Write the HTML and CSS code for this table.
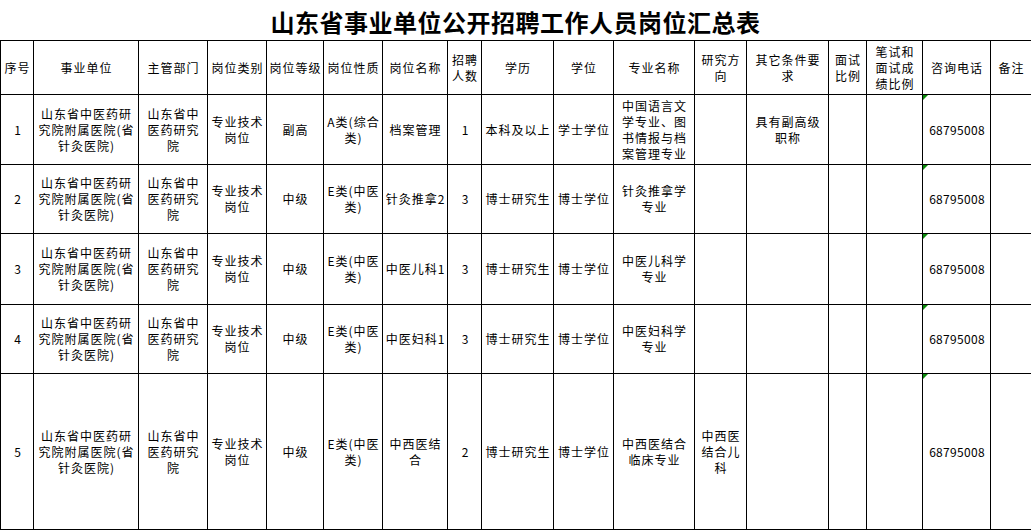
FILE: index.html
```html
<!DOCTYPE html>
<html lang="zh-CN">
<head>
<meta charset="utf-8">
<title>山东省事业单位公开招聘工作人员岗位汇总表</title>
<link rel="stylesheet" href="styles.css">
</head>
<body>
<div class="page">
  <h1 class="title">山东省事业单位公开招聘工作人员岗位汇总表</h1>
  <table class="grid">
    <colgroup>
      <col class="c1"><col class="c2"><col class="c3"><col class="c4"><col class="c5"><col class="c6"><col class="c7"><col class="c8"><col class="c9"><col class="c10"><col class="c11"><col class="c12"><col class="c13"><col class="c14"><col class="c15"><col class="c16"><col class="c17">
    </colgroup>
    <thead>
      <tr class="head">
        <th>序号</th><th>事业单位</th><th>主管部门</th><th>岗位类别</th><th>岗位等级</th><th>岗位性质</th><th>岗位名称</th><th>招聘<br>人数</th><th>学历</th><th>学位</th><th>专业名称</th><th>研究方<br>向</th><th>其它条件要<br>求</th><th>面试<br>比例</th><th>笔试和<br>面试成<br>绩比例</th><th>咨询电话</th><th>备注</th>
      </tr>
    </thead>
    <tbody>
      <tr class="r1">
        <td class="num">1</td><td>山东省中医药研<br>究院附属医院(省<br>针灸医院)</td><td>山东省中<br>医药研究<br>院</td><td>专业技术<br>岗位</td><td>副高</td><td>A类(综合<br>类)</td><td>档案管理</td><td class="num">1</td><td>本科及以上</td><td>学士学位</td><td>中国语言文<br>学专业、图<br>书情报与档<br>案管理专业</td><td></td><td>具有副高级<br>职称</td><td></td><td></td><td class="tel">68795008</td><td></td>
      </tr>
      <tr class="r2">
        <td class="num">2</td><td>山东省中医药研<br>究院附属医院(省<br>针灸医院)</td><td>山东省中<br>医药研究<br>院</td><td>专业技术<br>岗位</td><td>中级</td><td>E类(中医<br>类)</td><td>针灸推拿2</td><td class="num">3</td><td>博士研究生</td><td>博士学位</td><td>针灸推拿学<br>专业</td><td></td><td></td><td></td><td></td><td class="tel">68795008</td><td></td>
      </tr>
      <tr class="r3">
        <td class="num">3</td><td>山东省中医药研<br>究院附属医院(省<br>针灸医院)</td><td>山东省中<br>医药研究<br>院</td><td>专业技术<br>岗位</td><td>中级</td><td>E类(中医<br>类)</td><td>中医儿科1</td><td class="num">3</td><td>博士研究生</td><td>博士学位</td><td>中医儿科学<br>专业</td><td></td><td></td><td></td><td></td><td class="tel">68795008</td><td></td>
      </tr>
      <tr class="r4">
        <td class="num">4</td><td>山东省中医药研<br>究院附属医院(省<br>针灸医院)</td><td>山东省中<br>医药研究<br>院</td><td>专业技术<br>岗位</td><td>中级</td><td>E类(中医<br>类)</td><td>中医妇科1</td><td class="num">3</td><td>博士研究生</td><td>博士学位</td><td>中医妇科学<br>专业</td><td></td><td></td><td></td><td></td><td class="tel">68795008</td><td></td>
      </tr>
      <tr class="r5">
        <td class="num">5</td><td>山东省中医药研<br>究院附属医院(省<br>针灸医院)</td><td>山东省中<br>医药研究<br>院</td><td>专业技术<br>岗位</td><td>中级</td><td>E类(中医<br>类)</td><td>中西医结<br>合</td><td class="num">2</td><td>博士研究生</td><td>博士学位</td><td>中西医结合<br>临床专业</td><td>中西医<br>结合儿<br>科</td><td></td><td></td><td></td><td class="tel">68795008</td><td></td>
      </tr>
    </tbody>
  </table>
</div>
</body>
</html>
```

FILE: styles.css
```css
html, body {
  margin: 0;
  padding: 0;
  background: #ffffff;
}
body {
  font-family: "Noto Sans CJK SC", "Liberation Sans", sans-serif;
  color: #000000;
}
.page {
  width: 1031px;
}
.title {
  margin: 0;
  height: 40px;
  line-height: 44px;
  font-size: 24px;
  font-weight: bold;
  text-align: center;
  letter-spacing: 0.5px;
  font-family: "Noto Sans CJK SC", sans-serif;
}
.grid {
  border-collapse: collapse;
  table-layout: fixed;
  width: 1031px;
  font-size: 12px;
  line-height: 16px;
  letter-spacing: 1px;
}
.grid th, .grid td {
  border: 1px solid #000000;
  padding: 0 0 0 1px;
  text-align: center;
  vertical-align: middle;
  font-weight: normal;
  white-space: nowrap;
  overflow: hidden;
}
.c1 { width: 33px; }
.c2 { width: 105px; }
.c3 { width: 69px; }
.c4 { width: 59px; }
.c5 { width: 57px; }
.c6 { width: 59px; }
.c7 { width: 65px; }
.c8 { width: 34px; }
.c9 { width: 72px; }
.c10 { width: 60px; }
.c11 { width: 81px; }
.c12 { width: 52px; }
.c13 { width: 82px; }
.c14 { width: 38px; }
.c15 { width: 56px; }
.c16 { width: 68px; }
.c17 { width: 41px; }
.head { height: 54px; }
.r1 { height: 70px; }
.r2 { height: 69px; }
.r3 { height: 71px; }
.r4 { height: 69px; }
.r5 { height: 156px; }
.num {
  letter-spacing: 0;
}
.tel {
  position: relative;
  letter-spacing: 0.3px;
}
.tel::before {
  content: "";
  position: absolute;
  left: 0;
  top: 0;
  width: 0;
  height: 0;
  border-top: 5px solid #0a8a0a;
  border-right: 5px solid transparent;
}
```
